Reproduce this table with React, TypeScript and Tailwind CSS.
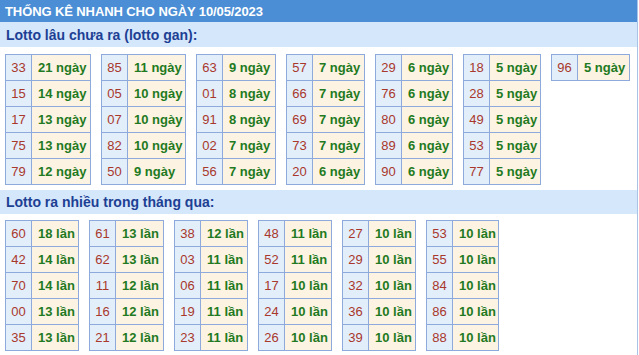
type Row = [string, number]

const ganTables: { w: number; rows: Row[] }[] = [
  { w: 58, rows: [['33', 21], ['15', 14], ['17', 13], ['75', 13], ['79', 12]] },
  { w: 57, rows: [['85', 11], ['05', 10], ['07', 10], ['82', 10], ['50', 9]] },
  { w: 52, rows: [['63', 9], ['01', 8], ['91', 8], ['02', 7], ['56', 7]] },
  { w: 51, rows: [['57', 7], ['66', 7], ['69', 7], ['73', 7], ['20', 6]] },
  { w: 50, rows: [['29', 6], ['76', 6], ['80', 6], ['89', 6], ['90', 6]] },
  { w: 50, rows: [['18', 5], ['28', 5], ['49', 5], ['53', 5], ['77', 5]] },
  { w: 51, rows: [['96', 5]] },
]

const nhieuTables: { w: number; rows: Row[] }[] = [
  { w: 46, rows: [['60', 18], ['42', 14], ['70', 14], ['00', 13], ['35', 13]] },
  { w: 47, rows: [['61', 13], ['62', 13], ['11', 12], ['16', 12], ['21', 12]] },
  { w: 46, rows: [['38', 12], ['03', 11], ['06', 11], ['19', 11], ['23', 11]] },
  { w: 46, rows: [['48', 11], ['52', 11], ['17', 10], ['24', 10], ['26', 10]] },
  { w: 46, rows: [['27', 10], ['29', 10], ['32', 10], ['36', 10], ['39', 10]] },
  { w: 45, rows: [['53', 10], ['55', 10], ['84', 10], ['86', 10], ['88', 10]] },
]

function LottoTable({ rows, unit, w }: { rows: Row[]; unit: string; w: number }) {
  return (
    <div className="shrink-0 border-t border-x border-[#8eaadc] flex flex-col">
      {rows.map(([num, count]) => (
        <div key={num} className="flex h-[26px] border-b border-[#8eaadc]">
          <div className="w-[26px] flex items-center justify-center bg-[#e3eefb] border-r border-[#8eaadc] text-[#a8382b]">
            {num}
          </div>
          <div
            className="flex items-center pl-[6px] bg-[#fdf3e2] font-bold text-[#1f7a22] whitespace-nowrap"
            style={{ width: w }}
          >
            {count} {unit}
          </div>
        </div>
      ))}
    </div>
  )
}

export default function App() {
  return (
    <div className="w-[639px] h-[355px] overflow-hidden bg-white font-['Liberation_Sans',Arial,sans-serif] text-[13px] leading-none">
      <div className="w-[638px] h-[355px] border-r border-[#a9c3e6]">
        <div className="h-[22px] bg-[#4b8ed5] flex items-center pl-[5px] text-white font-bold text-[13px] tracking-[-0.1px] whitespace-nowrap">
          THỐNG KÊ NHANH CHO NGÀY 10/05/2023
        </div>

        <div className="h-[25px] bg-[#d5e7fa] flex items-center pl-[6px] text-[#1d3f94] font-bold text-[14px]">
          Lotto lâu chưa ra (lotto gan):
        </div>
        <div className="flex items-start gap-[10px] pl-[5px] pt-[7px]">
          {ganTables.map((t, i) => (
            <LottoTable key={i} rows={t.rows} w={t.w} unit="ngày" />
          ))}
        </div>

        <div className="mt-[5px] h-[24px] bg-[#d5e7fa] flex items-center pl-[6px] text-[#1d3f94] font-bold text-[14px]">
          Lotto ra nhiều trong tháng qua:
        </div>
        <div className="flex items-start gap-[10px] pl-[5px] pt-[6px]">
          {nhieuTables.map((t, i) => (
            <LottoTable key={i} rows={t.rows} w={t.w} unit="lần" />
          ))}
        </div>
      </div>
    </div>
  )
}
